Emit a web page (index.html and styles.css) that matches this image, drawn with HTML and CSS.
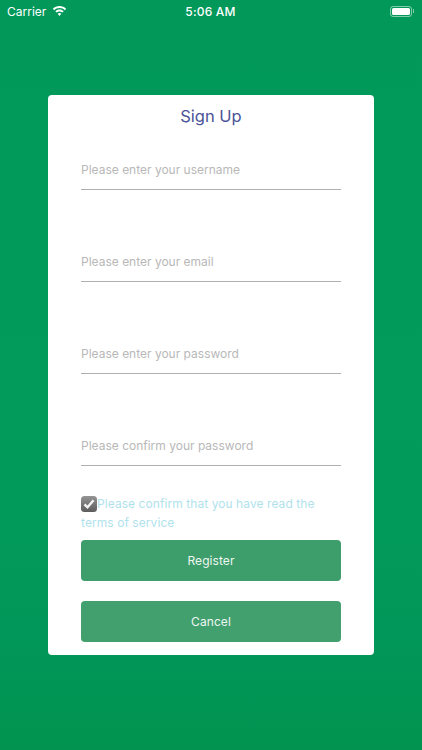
FILE: index.html
```html
<!DOCTYPE html>
<html lang="en">
<head>
<meta charset="utf-8">
<title>Sign Up</title>
<link rel="stylesheet" href="styles.css">
</head>
<body>
<div class="screen">
  <div class="status">
    <div class="status-left">
      <span>Carrier</span>
      <svg class="wifi" viewBox="0 0 16 12" width="15" height="11"><path fill="#fff" d="M8 2.200c2.300 0 4.300.9 5.800 2.300l1.500-1.600C13.400 1 10.800 0 8 0S2.600 1 .7 2.900l1.500 1.600C3.700 3.100 5.700 2.200 8 2.200zM8 6c1.200 0 2.300.5 3.100 1.200l1.500-1.600C11.400 4.500 9.800 3.800 8 3.800S4.600 4.500 3.400 5.600l1.500 1.600C5.700 6.500 6.800 6 8 6zM8 7.700c-.8 0-1.500.3-2 .8L8 11l2-2.500c-.5-.5-1.200-.8-2-.8z"/></svg>
    </div>
    <div class="status-time">5:06 AM</div>
    <div class="status-right">
      <div class="battery"><div class="battery-fill"></div></div>
      <div class="battery-cap"></div>
    </div>
  </div>
  <main class="card">
    <h1 class="title">Sign Up</h1>
    <div class="fields">
      <div class="field">Please enter your username</div>
      <div class="field">Please enter your email</div>
      <div class="field">Please enter your password</div>
      <div class="field">Please confirm your password</div>
    </div>
    <p class="terms"><svg class="check" viewBox="0 0 16 16" width="16" height="16"><defs><linearGradient id="cb" x1="0" y1="0" x2="0" y2="1"><stop offset="0" stop-color="#949494"/><stop offset="1" stop-color="#5c5c5c"/></linearGradient></defs><rect width="16" height="16" rx="3.500" fill="url(#cb)"/><path d="M3.500 8.300l3 3 6-7" fill="none" stroke="#f4f4f4" stroke-width="2.400"/></svg>Please confirm that you have read the terms of service</p>
    <div class="btn btn-register">Register</div>
    <div class="btn btn-cancel">Cancel</div>
  </main>
</div>
</body>
</html>
```
FILE: styles.css
```css
* { box-sizing: border-box; }
html, body { margin: 0; padding: 0; }
body { width: 422px; height: 750px; overflow: hidden; font-family: Inter, "Liberation Sans", sans-serif; }
.screen {
  width: 422px; height: 750px;
  background: linear-gradient(180deg, #01985a 0%, #029b5b 55%, #01975a 85%, #01934f 100%);
  display: flex; flex-direction: column; align-items: center;
}
.status {
  width: 100%; height: 22px; padding: 0 8px 0 7px;
  display: grid; grid-template-columns: 1fr auto 1fr; align-items: center;
  color: #fff; font-size: 12px;
}
.status-left { display: flex; align-items: center; gap: 6px; }
.wifi { margin-top: 0; }
.status-time { font-weight: 500; font-size: 12px; letter-spacing: .2px; }
.status-right { display: flex; justify-content: flex-end; align-items: center; gap: 1px; }
.battery { width: 22px; height: 11px; border: 1px solid rgba(255,255,255,.5); border-radius: 3px; padding: 1px; }
.battery-fill { width: 100%; height: 100%; background: #fff; border-radius: 1.500px; }
.battery-cap { width: 1px; height: 4px; background: rgba(255,255,255,.5); }
.card {
  width: 326px; height: 560px; margin-top: 73px;
  background: #fff; border-radius: 4px;
  padding: 0 33px 0 33px;
  display: flex; flex-direction: column;
}
.title { margin: 10px 0 0; height: 22px; line-height: 22px; text-align: center; font-size: 16.500px; font-weight: 400; color: #4b5396; }
.fields { display: flex; flex-direction: column; gap: 49.500px; margin-top: 20px; }
.field {
  height: 42.500px; padding-top: 13.600px; line-height: 18px;
  border-bottom: 1.500px solid #b0b0b0;
  font-size: 12px; color: #b8b8b8;
}
.terms { margin: 29.500px 0 0; font-size: 12px; line-height: 18.500px; letter-spacing: .07px; color: #b0e2ec; }
.check { vertical-align: -3.500px; }
.btn {
  height: 41px; border-radius: 4px; display: flex; align-items: center; justify-content: center;
  color: #eef7f1; font-size: 12px; letter-spacing: .07px; background: #3d9d6b;
}
.btn-register { margin-top: 7.500px; }
.btn-cancel { margin-top: 20px; background: #42a06f; }
```
